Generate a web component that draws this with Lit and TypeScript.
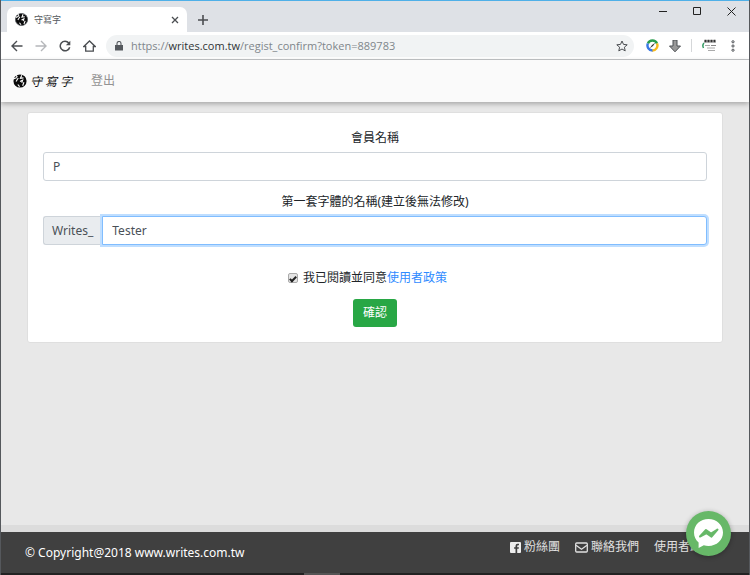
import { LitElement, html, css, svg } from "lit";
import { customElement, state } from "lit/decorators.js";

const inkMark = svg`
  <circle cx="8" cy="8" r="7.500" fill="#0a0a0a"/>
  <path d="M1 5.500L4.500 4M3.500 1.500L5 3.500M6 4.500L3.500 8.500M10 1.500L8.500 5L12 4.500M8 8.500L11 7L10 10M5.500 12L7.500 14.500M12.500 9.500L11 13.500" stroke="#fff" stroke-width="1.300" fill="none"/>`;

@customElement("browser-chrome")
export class BrowserChrome extends LitElement {
  static styles = css`
    :host { display: block; font-family: "Noto Sans", "Noto Sans CJK TC", sans-serif; }
    button { border: 0; padding: 0; background: none; display: flex; align-items: center; justify-content: center; color: #4b4e52; }
    svg { display: block; fill: none; stroke: currentColor; }
    .titlebar { display: flex; box-sizing: border-box; height: 32px; background: #dee1e6; border-top: 1px solid #4fb0e8; }
    .tab { display: flex; align-items: center; gap: 6px; width: 180px; box-sizing: border-box; margin: 6px 0 0 6px; padding: 0 8px; background: #fff; border-radius: 7px 7px 0 0; font-size: 9px; color: #55595e; }
    .tab-title { flex: 1; }
    .new-tab { width: 18px; margin: 6px 0 0 7px; }
    .window { display: flex; gap: 19px; margin-left: auto; padding-right: 10px; height: 21px; align-items: center; }
    .window button { width: 15px; color: #222; }
    .toolbar { display: flex; align-items: center; height: 28px; box-sizing: border-box; background: #fff; border-bottom: 1px solid #c4c6c8; padding: 0 10px 0 9px; }
    .nav { display: flex; gap: 10px; }
    .nav button { width: 14px; }
    .nav .off { color: #b5b7ba; }
    .address { display: flex; align-items: center; flex: 1; gap: 8px; height: 22px; margin: 0 12px 0 10px; padding: 0 6px 0 9px; border-radius: 11px; background: #f1f3f4; }
    .address-text { flex: 1; font: 11px/20px "Open Sans", sans-serif; color: #80868b; white-space: nowrap; }
    .address-text b { font-weight: 400; color: #303336; }
    .tools { display: flex; align-items: center; gap: 10px; }
    .rule { width: 1px; height: 13px; background: #d5d7d9; }
  `;

  render() {
    return html`
      <div class="titlebar">
        <div class="tab">
          <svg width="13" height="13" viewBox="0 0 16 16" stroke="none">${inkMark}</svg>
          <span class="tab-title">守寫字</span>
          <button aria-label="Close tab"><svg width="8" height="8" viewBox="0 0 8 8" stroke-width="1.3"><path d="M1 1l6 6M7 1l-6 6"/></svg></button>
        </div>
        <button class="new-tab" aria-label="New tab"><svg width="10" height="10" viewBox="0 0 10 10" stroke-width="1.6"><path d="M5 0v10M0 5h10"/></svg></button>
        <div class="window">
          <button aria-label="Minimize"><svg width="9" height="9" viewBox="0 0 9 9"><path d="M0 4.5h8"/></svg></button>
          <button aria-label="Maximize"><svg width="9" height="9" viewBox="0 0 9 9"><path d="M.5 .5h7v7h-7z"/></svg></button>
          <button aria-label="Close"><svg width="9" height="9" viewBox="0 0 9 9"><path d="M.5 .5l8 8M8.500 .5l-8 8"/></svg></button>
        </div>
      </div>
      <div class="toolbar">
        <div class="nav">
          <button aria-label="Back"><svg width="12" height="12" viewBox="0 0 12 12" stroke-width="1.4"><path d="M11.500 6H1.500M6 1L1 6l5 5"/></svg></button>
          <button class="off" aria-label="Forward"><svg width="12" height="12" viewBox="0 0 12 12" stroke-width="1.4"><path d="M.5 6h10M6 1l5 5-5 5"/></svg></button>
          <button aria-label="Reload"><svg width="12" height="12" viewBox="0 0 12 12" stroke-width="1.5"><path d="M9.800 3A4.800 4.800 0 1 0 10.700 7.200"/><path d="M11.300 .8v4.500H6.800z" fill="currentColor" stroke="none"/></svg></button>
          <button aria-label="Home"><svg width="13" height="12" viewBox="0 0 13 12" stroke-width="1.3"><path d="M.8 6.500L6.500 1l5.700 5.500H10.300v4.700H2.700V6.500z"/></svg></button>
        </div>
        <div class="address">
          <svg width="8" height="10" viewBox="0 0 8 10" stroke-width="1.1" color="#55595e"><path d="M2 4V2.500a2 2 0 0 1 4 0V4"/><path d="M0 4h8v5.500H0z" fill="currentColor" stroke="none"/></svg>
          <span class="address-text">https://<b>writes.com.tw</b>/regist_confirm?token=889783</span>
          <button aria-label="Bookmark"><svg width="12" height="12" viewBox="0 0 12 12"><path d="M6 1l1.500 3.400 3.700.4-2.800 2.400.8 3.700L6 9l-3.200 1.900.8-3.700L.8 4.800l3.700-.4z"/></svg></button>
        </div>
        <div class="tools">
          <button aria-label="Compass extension"><svg width="13" height="13" viewBox="0 0 13 13" stroke-width="2.4"><path d="M1.900 4.500A5 5 0 0 1 11 4.500" stroke="#2a9d4e"/><path d="M11 4.500A5 5 0 0 1 6 11.500" stroke="#f8b91c"/><path d="M6.500 11.500A5 5 0 0 1 1.900 4.500" stroke="#3978e6"/><path d="M3.800 9.200L6 6l3.200-2.200L7 7z" fill="#333" stroke="none"/></svg></button>
          <button aria-label="Downloads"><svg width="12" height="12" viewBox="0 0 12 12" stroke="none"><path d="M4 0h4v6h3.500L6 11.800.5 6H4z" fill="#999"/></svg></button>
          <span class="rule"></span>
          <button aria-label="Profile"><svg width="15" height="13" viewBox="0 0 15 13"><path d="M2.500 1h10.500l1 3H2z" fill="#c9c9c9" stroke="none"/><path d="M2.500 2h11.500" stroke="#333" stroke-width="2.500" stroke-dasharray="2 1"/><path d="M3 6.500h5M5 9h8M6 11.500h7" stroke="#aaa"/><path d="M2 4Q0 6 1.500 9" stroke="#319b62" stroke-width="1.500"/><path d="M9 6.500h5" stroke="#888"/></svg></button>
          <button aria-label="Menu"><svg width="12" height="12" viewBox="0 0 12 12" stroke="none" fill="#4b4e52"><circle cx="6" cy="1.800" r="1.100"/><circle cx="6" cy="6" r="1.100"/><circle cx="6" cy="10.200" r="1.100"/></svg></button>
        </div>
      </div>`;
  }
}

@customElement("app-root")
export class AppRoot extends LitElement {
  @state() agreed = true;

  static styles = css`
    :host { display: flex; flex-direction: column; min-height: 100vh; box-sizing: border-box; background: #e8e8e8; border: solid #55585c; border-width: 0 1px; font: 12px/18px "Noto Sans", "Noto Sans CJK TC", sans-serif; color: #212529; }
    a { color: inherit; text-decoration: none; }
    .site-nav { display: flex; align-items: center; gap: 19px; height: 42px; padding: 0 12px; background: #fafafa; box-shadow: 0 2px 5px rgba(0, 0, 0, 0.28); }
    .brand { display: flex; align-items: center; gap: 3px; color: #111; font: italic 12px/18px "Noto Sans CJK TC", sans-serif; }
    .logout { color: #929292; }
    main { flex: 1; padding: 10px 26px; }
    .card { display: flex; flex-direction: column; align-items: center; padding: 16px 15px 15px; background: #fff; border: 1px solid #dfdfdf; border-radius: 3px; }
    .card > label { margin-bottom: 5px; }
    .field { box-sizing: border-box; width: 100%; height: 29px; padding: 0 9px; border: 1px solid #ced4da; border-radius: 3px; background: #fff; color: #495057; font: inherit; outline: 0; }
    .member { margin-bottom: 12px; }
    .group { display: flex; width: 100%; margin-bottom: 24px; }
    .prefix { box-sizing: border-box; height: 29px; padding: 0 9px 0 8px; line-height: 27px; background: #e9ecef; border: 1px solid #ced4da; border-right: 0; border-radius: 3px 0 0 3px; color: #495057; }
    .active { flex: 1; width: auto; min-width: 0; border-color: #80bdff; border-radius: 0 3px 3px 0; box-shadow: 0 0 0 2px #bfdeff; }
    .agree { display: flex; align-items: center; gap: 5px; margin-bottom: 12px; padding-right: 15px; }
    .agree input { width: 10px; height: 10px; margin: 0; appearance: none; border: 1px solid #aaa; border-radius: 2px; background: #e4e4e4; display: grid; place-items: center; }
    .agree input:checked::after { content: ""; width: 2px; height: 5px; border: solid #222; border-width: 0 2px 2px 0; transform: rotate(45deg); }
    .agree a { color: #2f8bff; }
    .confirm { height: 28px; padding: 0 10px; border: 0; border-radius: 3px; background: #28a745; color: #fff; font: inherit; }
    footer { display: flex; justify-content: space-between; height: 41px; padding: 0 35px 0 24px; background: #404040; border-top: 7px solid #dcdcdc; color: #fff; }
    .copyright { padding-top: 12px; }
    .links { display: flex; gap: 15px; padding-top: 6px; color: #e0e0e0; }
    .links a { display: flex; align-items: center; gap: 3px; height: 18px; }
    .base { height: 2px; background: #222; display: flex; justify-content: center; padding-right: 106px; }
    .base span { width: 36px; background: #555; }
    .chat { position: fixed; right: 19px; bottom: 19px; width: 45px; height: 45px; padding: 0; border: 0; border-radius: 50%; background: #67b868; box-shadow: 0 1px 5px rgba(0, 0, 0, 0.3); display: flex; align-items: center; justify-content: center; }
  `;

  render() {
    return html`
      <browser-chrome></browser-chrome>
      <nav class="site-nav">
        <a class="brand" href="#"><svg width="14" height="14" viewBox="0 0 16 16">${inkMark}</svg><span>守</span><span>寫</span><span>字</span></a>
        <a class="logout" href="#">登出</a>
      </nav>
      <main>
        <form class="card" @submit=${(e: Event) => e.preventDefault()}>
          <label for="member">會員名稱</label>
          <input id="member" class="field member" .value=${"P"}>
          <label for="font-name">第一套字體的名稱(建立後無法修改)</label>
          <div class="group">
            <span class="prefix">Writes_</span>
            <input id="font-name" class="field active" .value=${"Tester"}>
          </div>
          <div class="agree">
            <input id="agree" type="checkbox" .checked=${this.agreed} @change=${() => (this.agreed = !this.agreed)}>
            <span><label for="agree">我已閱讀並同意</label><a href="#">使用者政策</a></span>
          </div>
          <button class="confirm">確認</button>
        </form>
      </main>
      <footer>
        <span class="copyright">© Copyright@2018 www.writes.com.tw</span>
        <div class="links">
          <a href="#"><svg width="11" height="11" viewBox="0 0 11 11"><rect width="11" height="11" rx="1" fill="#eee"/><path d="M7.200 11V6.800h1.500l.2-1.600H7.200V4.100q0-.8.9-.8h.9V1.800H7.600Q5.500 1.800 5.500 3.900v1.300H4.100v1.600h1.400V11z" fill="#404040"/></svg>粉絲團</a>
          <a href="#"><svg width="13" height="11" viewBox="0 0 13 11" fill="none" stroke="#e0e0e0" stroke-width="1.300"><rect x=".7" y="1" width="11.600" height="9" rx="1"/><path d="M1 3.200l5.500 4 5.500-4"/></svg>聯絡我們</a>
          <a href="#">使用者政策</a>
        </div>
      </footer>
      <div class="base"><span></span></div>
      <button class="chat" aria-label="Messenger">
        <svg width="31" height="31" viewBox="0 0 31 31"><path d="M15.500 1C7.300 1 1 6.800 1 14.500c0 4 1.700 7.500 4.600 9.900V30l5.200-2.700c1.500.4 3.100.6 4.700.6 8.200 0 14.500-5.800 14.500-13.400S23.700 1 15.500 1z" fill="#fff"/><path d="M7 18.500l6-6.500 5 3.500 6.500-4-6 7.200-5-3.500z" fill="#67b868" stroke="#67b868" stroke-width="2" stroke-linejoin="round"/></svg>
      </button>`;
  }
}
